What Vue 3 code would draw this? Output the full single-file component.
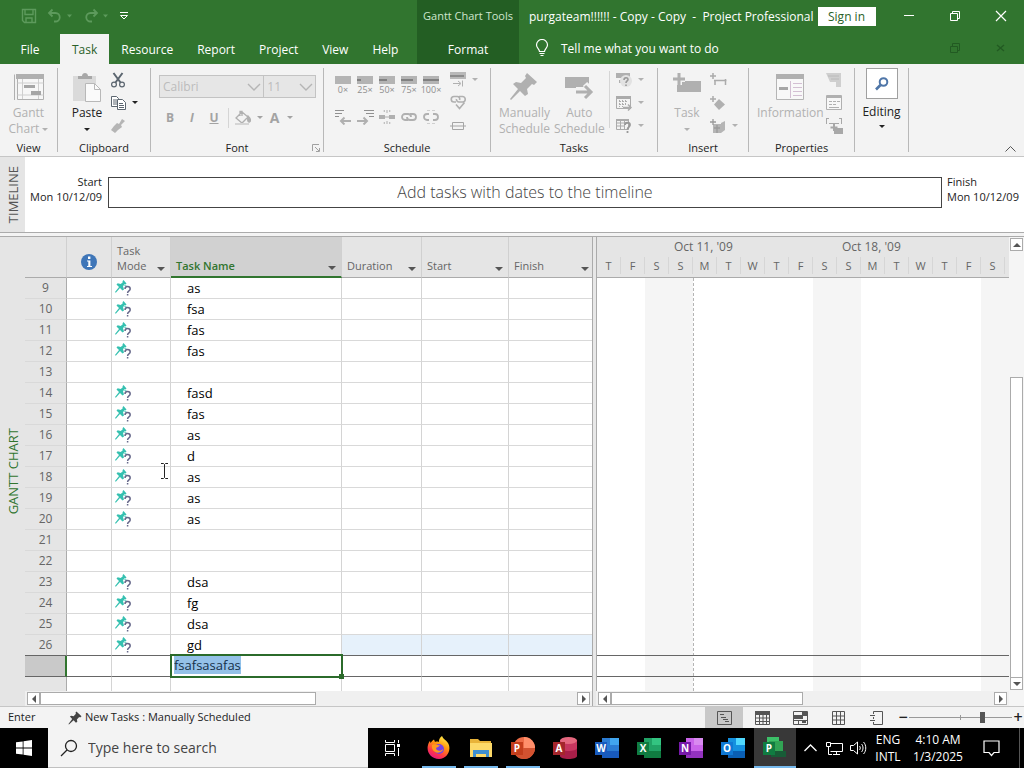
<script setup>
import { computed, onMounted, ref } from 'vue'

const tabs = ['File', 'Task', 'Resource', 'Report', 'Project', 'View', 'Help']
const activeTab = ref('Task')

const percents = [
  { label: '0×', fill: 0 },
  { label: '25×', fill: 4 },
  { label: '50×', fill: 8 },
  { label: '75×', fill: 12 },
  { label: '100×', fill: 16 }
]

const names = {
  9: 'as', 10: 'fsa', 11: 'fas', 12: 'fas', 14: 'fasd', 15: 'fas', 16: 'as', 17: 'd',
  18: 'as', 19: 'as', 20: 'as', 23: 'dsa', 24: 'fg', 25: 'dsa', 26: 'gd'
}
const rows = computed(() => {
  const list = []
  for (let id = 9; id <= 26; id++) list.push({ id, name: names[id] || '' })
  return list
})

const newTask = ref('fsafsasafas')
const editor = ref(null)

const weeks = [
  { label: '', days: ['T', 'F', 'S'] },
  { label: "Oct 11, '09", days: ['S', 'M', 'T', 'W', 'T', 'F', 'S'] },
  { label: "Oct 18, '09", days: ['S', 'M', 'T', 'W', 'T', 'F', 'S'] }
]
// the chart starts on a Thursday, so days 2 and 3 of every seven are the weekend
const dayColumns = Array.from({ length: 18 }, (_, i) => ({
  weekend: i % 7 === 2 || i % 7 === 3,
  today: i === 4
}))

const apps = [
  { letter: 'P', name: 'PowerPoint', kind: 'round', open: true, a: '#ed6c47', b: '#ff8f6b', c: '#d35230', d: '#c43e1c' },
  { letter: 'A', name: 'Access', kind: 'db', a: '#c7365f', b: '#e4677e', c: '#a81e48', d: '#a4262c' },
  { letter: 'W', name: 'Word', kind: 'doc', a: '#2b7cd3', b: '#41a5ee', c: '#185abd', d: '#185abd' },
  { letter: 'X', name: 'Excel', kind: 'doc', a: '#21a366', b: '#33c481', c: '#107c41', d: '#107c41' },
  { letter: 'N', name: 'OneNote', kind: 'doc', a: '#ca64ea', b: '#d98af0', c: '#9332bf', d: '#7719aa' },
  { letter: 'O', name: 'Outlook', kind: 'doc', a: '#1490df', b: '#50d9ff', c: '#0a5fb4', d: '#0f78d4' },
  { letter: 'P', name: 'Project', kind: 'proj', active: true, a: '#31a354', b: '#3cc068', c: '#185c37', d: '#107c41' }
]

const zoomLevel = ref(72)

onMounted(() => {
  editor.value.focus()
  editor.value.select()
})
</script>

<template>
  <div class="app">
    <header class="top">
      <div class="title-bar">
        <div class="quick">
          <button aria-label="Save">
            <svg width="16" height="16" viewBox="0 0 16 16" fill="none" stroke="#5d9a5c" stroke-width="1.4"><path d="M1.5 1.5h13v13h-11l-2-2zM4 1.5v5h8v-5M5 14.5v-4.5h6v4.5" /></svg>
          </button>
          <button aria-label="Undo">
            <svg width="26" height="16" viewBox="0 0 26 16" fill="none" stroke="#5d9a5c" stroke-width="1.8"><path d="M5.5 1.5L2 5l3.5 3.5M2 5h6.5a4 4 0 0 1 0 8.5H7" /><path d="M20 6.5h5l-2.5 3z" fill="#5d9a5c" stroke="none" /></svg>
          </button>
          <button aria-label="Redo">
            <svg width="26" height="16" viewBox="0 0 26 16" fill="none" stroke="#5d9a5c" stroke-width="1.8"><path d="M10.5 1.5L14 5l-3.5 3.5M14 5H7.5a4 4 0 0 0 0 8.5H9" /><path d="M20 6.5h5l-2.5 3z" fill="#5d9a5c" stroke="none" /></svg>
          </button>
          <button aria-label="Customize toolbar">
            <svg width="10" height="10" viewBox="0 0 10 10" fill="none" stroke="#fff"><path d="M1 1.5h8M1.5 4.5h7L5 8z" /></svg>
          </button>
        </div>
        <div class="context-title">Gantt Chart Tools</div>
        <div class="doc-title">purgateam!!!!!! - Copy - Copy&nbsp; -&nbsp; Project Professional</div>
        <button class="sign-in">Sign in</button>
        <div class="window-buttons">
          <button aria-label="Minimize"><svg width="12" height="12" viewBox="0 0 12 12" stroke="#fff"><path d="M1 5.5h10" /></svg></button>
          <button aria-label="Restore"><svg width="12" height="12" viewBox="0 0 12 12" fill="none" stroke="#fff"><path d="M1.5 3.5h7v7h-7zM3.5 3.5v-2h7v7h-2" /></svg></button>
          <button aria-label="Close"><svg width="12" height="12" viewBox="0 0 12 12" stroke="#fff" stroke-width="1.2"><path d="M1 1l10 10M11 1L1 11" /></svg></button>
        </div>
      </div>
      <nav class="tab-row">
        <div class="tabs">
          <button v-for="t in tabs" :key="t" class="tab" :class="{ active: t === activeTab }" @click="activeTab = t">{{ t }}</button>
        </div>
        <button class="tab context-tab">Format</button>
        <button class="tell-me">
          <svg width="14" height="18" viewBox="0 0 14 18" fill="none" stroke="#fff" stroke-width="1.2"><path d="M4.5 12.5c0-2.5-3-3.5-3-6.5a5.5 5.5 0 0 1 11 0c0 3-3 4-3 6.5zM4.5 14.5h5M5.5 16.5h3" /></svg>
          Tell me what you want to do
        </button>
        <div class="window-buttons child">
          <button aria-label="Restore document"><svg width="12" height="12" viewBox="0 0 12 12" fill="none" stroke="#225a22"><path d="M1.5 4.5h7v6h-7zM3.5 4.5v-3h7v7h-2" /></svg></button>
          <button aria-label="Close document"><svg width="12" height="12" viewBox="0 0 12 12" stroke="#225a22" stroke-width="1.4"><path d="M2 3l7 6M9 3L2 9" /></svg></button>
        </div>
      </nav>
    </header>

    <section class="ribbon">
      <div class="group g-view">
        <div class="tools">
          <button class="big" disabled>
            <svg width="32" height="30" viewBox="0 0 32 30" fill="none" stroke="#b0b0b0"><path d="M1.5 28V2.5M4.5 3.5h26v24h-26z" fill="#f7f7f7" /><path d="M3 2h28v5H3z" fill="#b0b0b0" stroke="none" /><path d="M4.5 11h26M9.5 7v20M25.5 7v20M4.5 23h26" stroke="#cfcfcf" /><path d="M11 13h11v3H11zM18 19h10v4H18z" fill="#a6a6a6" stroke="none" /></svg>
            <span>Gantt<br />Chart <i class="caret"></i></span>
          </button>
        </div>
        <div class="group-label">View</div>
      </div>
      <div class="group g-clipboard">
        <div class="tools from-left">
          <button class="big">
            <svg width="30" height="30" viewBox="0 0 30 30"><path d="M1 4h23v25H1z" fill="#dadada" /><path d="M6 7V4h4c0-4 6-4 6 0h4v3z" fill="#a8a8a8" /><path d="M13.5 11.5h9l6 6v12h-15z" fill="#fafafa" stroke="#b8b8b8" /><path d="M22.5 11.5v6h6" fill="none" stroke="#b8b8b8" /></svg>
            <span>Paste<br /><i class="caret"></i></span>
          </button>
          <div class="small-stack">
            <button aria-label="Cut"><svg width="16" height="16" viewBox="0 0 16 16" fill="none" stroke="#5c6670" stroke-width="1.6"><path d="M3.5 1l7 9.5M12.5 1l-7 9.5" stroke-width="2" /><circle cx="4" cy="12.5" r="2.4" stroke-width="1.2" /><circle cx="12" cy="12.5" r="2.4" stroke-width="1.2" /></svg></button>
            <button aria-label="Copy"><svg width="16" height="16" viewBox="0 0 16 16" fill="#fff" stroke="#5c6670"><path d="M1.5 1.5h5l2 2v8h-7zM3 5h4M3 7h4M3 9h4" /><path d="M7.5 4.5h5l3 3v7h-8zM9 8.5h4M9 10.5h5M9 12.5h5" /></svg><i class="caret"></i></button>
            <button aria-label="Format Painter" disabled><svg width="16" height="16" viewBox="0 0 16 16" fill="#b5b5b5"><path d="M12 1l3 2-4 4 1 2-4 3-4-4 3-3 2 1zM4 8l4 4-3 3-4-3z" /></svg></button>
          </div>
        </div>
        <div class="group-label">Clipboard</div>
      </div>
      <div class="group g-font">
        <div class="tools font-tools">
          <div class="combos">
            <label class="combo family"><select disabled aria-label="Font"><option>Calibri</option></select><svg width="14" height="8" viewBox="0 0 14 8" fill="none" stroke="#b5b5b5" stroke-width="1.4"><path d="M1 1l6 6 6-6" /></svg></label>
            <label class="combo size"><select disabled aria-label="Font size"><option>11</option></select><svg width="14" height="8" viewBox="0 0 14 8" fill="none" stroke="#b5b5b5" stroke-width="1.4"><path d="M1 1l6 6 6-6" /></svg></label>
          </div>
          <div class="format-row">
            <button disabled><b>B</b></button>
            <button disabled><b><i>I</i></b></button>
            <button disabled><b><u>U</u></b></button>
            <span class="split"></span>
            <button class="wide" disabled aria-label="Fill color"><svg width="18" height="16" viewBox="0 0 18 16" fill="none" stroke="#b0b0b0" stroke-width="1.3"><path d="M8 2l6 5-6 6-6-5zM6 6V1.5h2V6" /><path d="M14 6c3 3 3 5 1.500 6S13 9 14 6z" fill="#b0b0b0" /><path d="M1 14h14" stroke="#d5d5d5" stroke-width="2" /></svg><i class="caret"></i></button>
            <button class="wide letter" disabled><b>A</b><i class="caret"></i></button>
          </div>
        </div>
        <div class="group-label">Font
          <button class="launcher" aria-label="Font settings"><svg width="8" height="8" viewBox="0 0 8 8" fill="none" stroke="#a0a0a0"><path d="M7 .5H.5V7M3 3l4 4M7.5 4v3.5H4" /></svg></button>
        </div>
      </div>
      <div class="group g-schedule">
        <div class="tools from-left">
          <div class="schedule-grid">
            <button v-for="p in percents" :key="p.label" disabled class="percent">
              <svg width="16" height="8" viewBox="0 0 16 8"><path d="M0 0h16v8H0z" fill="#b4b4b4" /><path :d="`M0 3h${p.fill}v2H0z`" fill="#808080" /></svg>
              <span>{{ p.label }}</span>
            </button>
            <button disabled aria-label="Outdent"><svg width="17" height="15" viewBox="0 0 17 15" fill="none" stroke="#b0b0b0"><path d="M0 .5h9M0 3.5h7M0 6.5h4" stroke="#909090" /><path d="M16 11H6M9.5 7.500L6 11l3.5 3.5" stroke-width="2" /></svg></button>
            <button disabled aria-label="Indent"><svg width="17" height="15" viewBox="0 0 17 15" fill="none" stroke="#b0b0b0"><path d="M7 .5h10M9 3.5h8M12 6.5h5" stroke="#909090" /><path d="M0 11h10M6.5 7.500L10 11l-3.5 3.5" stroke-width="2" /></svg></button>
            <button disabled aria-label="Split"><svg width="16" height="16" viewBox="0 0 16 16" fill="#b0b0b0"><path d="M0 6h6v4H0zM10 6h6v4h-6zM6 7.5h4v1H6zM4 2l2-1v2zM12 2l-2-1v2zM4 14l2-1v2zM12 14l-2-1v2zM7.5 1h1v3h-1zM7.5 12h1v3h-1z" /></svg></button>
            <button disabled aria-label="Link"><svg width="16" height="10" viewBox="0 0 16 10" fill="none" stroke="#b0b0b0" stroke-width="1.8"><path d="M7 8H4a3 3 0 0 1 0-6h3a3 3 0 0 1 3 3M9 2h3a3 3 0 0 1 0 6H9a3 3 0 0 1-3-3" /></svg></button>
            <button disabled aria-label="Unlink"><svg width="16" height="14" viewBox="0 0 16 14" fill="none" stroke="#b0b0b0" stroke-width="1.8"><path d="M6 10H4a3 3 0 0 1 0-6h2M10 4h2a3 3 0 0 1 0 6h-2" /><path d="M4 .5h3M9 .5h3M4 13.5h3M9 13.5h3" stroke="#cfcfcf" stroke-width="1" /></svg></button>
          </div>
          <div class="small-stack">
            <button disabled aria-label="Mark on Track"><svg width="16" height="15" viewBox="0 0 16 15"><path d="M0 0h16v7H0z" fill="#b9b9b9" /><path d="M0 3h14v2H0z" fill="#8c8c8c" /><path d="M3 11.5h7M8 9l3 2.5L8 14M12.5 8.5v6" fill="none" stroke="#b0b0b0" /></svg><i class="caret"></i></button>
            <button disabled aria-label="Respect Links"><svg width="16" height="15" viewBox="0 0 16 15" fill="none" stroke="#b0b0b0" stroke-width="1.6"><path d="M6 7H4a2.500 2.500 0 0 1 0-5.500h3A2.500 2.500 0 0 1 9.500 5M9 1.500h3.500a2.500 2.500 0 0 1 0 5.500H9a2.500 2.500 0 0 1-2.500-3M6 9.500l3.500 4 5-6" /></svg></button>
            <button disabled aria-label="Inactivate"><svg width="16" height="8" viewBox="0 0 16 8" fill="none" stroke="#a5a5a5"><path d="M2.5.5h11v7h-11zM0 4h16" /></svg></button>
          </div>
        </div>
        <div class="group-label">Schedule</div>
      </div>
      <div class="group g-tasks">
        <div class="tools from-left">
          <button class="big" disabled>
            <svg width="30" height="30" viewBox="0 0 30 30" fill="#b0b0b0"><path d="M18 1l10 9-3 3-2-1-5 5 1 5-3 2-5-5L2 28l-1-1 8-10-5-5 3-2 5 1 5-5-1-2z" /></svg>
            <span>Manually<br />Schedule</span>
          </button>
          <button class="big" disabled>
            <svg width="30" height="30" viewBox="0 0 30 30" fill="#b0b0b0"><path d="M1 5h24v11H1z" /><path d="M12 18h14M21 12l6 6-6 6" fill="none" stroke="#f3f3f3" stroke-width="6" /><path d="M12 20h14M21 14l6 6-6 6" fill="none" stroke="#b0b0b0" stroke-width="3" /></svg>
            <span>Auto<br />Schedule</span>
          </button>
          <span class="split tall"></span>
          <div class="small-stack">
            <button disabled aria-label="Inspect"><svg width="16" height="16" viewBox="0 0 16 16"><path d="M0 1h14v5H0zM3 8h4v3H3z" fill="#b0b0b0" /><circle cx="10" cy="9" r="6" fill="#e2e2e2" /><path d="M8 8c0-3 4-3 4-.5 0 1.500-2 1.500-2 3.500M10 12.500v1.500" fill="none" stroke="#999" stroke-width="1.6" /></svg><i class="caret"></i></button>
            <button disabled aria-label="Move"><svg width="16" height="16" viewBox="0 0 16 16" fill="none" stroke="#ababab"><path d="M.5 1.5h14v12H.5z" /><path d="M0 1h15v3H0z" fill="#ababab" stroke="none" /><path d="M3 6.500h9M3 9.500h7M3.500 5v7M6.500 5v7M9.500 5v5" stroke-dasharray="2 1" /><path d="M7 12.500h8M12 9.500l3 3-3 3" stroke-width="1.5" /></svg><i class="caret"></i></button>
            <button disabled aria-label="Mode"><svg width="16" height="16" viewBox="0 0 16 16" fill="none" stroke="#ababab"><path d="M.5 1.5h12v10H.5zM.5 5h12M.5 8h8M4.500 2v9M8.500 2v9" /><path d="M0 1h13v2H0z" fill="#ababab" stroke="none" /><path d="M9 7c0-3 5-3 5 0 0 2-2.500 2-2.500 4.500M11.500 13v2" stroke="#999" stroke-width="1.8" /></svg><i class="caret"></i></button>
          </div>
        </div>
        <div class="group-label">Tasks</div>
      </div>
      <div class="group g-insert">
        <div class="tools from-left">
          <button class="big" disabled>
            <svg width="30" height="30" viewBox="0 0 30 30" fill="#b0b0b0"><path d="M7 9h22v11H5v-7h2z" /><path d="M7 1v12M1 7h12" stroke="#f3f3f3" stroke-width="6" /><path d="M7 1v12M1 7h12" stroke="#b0b0b0" stroke-width="3" /></svg>
            <span>Task<br /><i class="caret"></i></span>
          </button>
          <div class="small-stack">
            <button disabled aria-label="Summary"><svg width="17" height="14" viewBox="0 0 17 14" fill="none" stroke="#ababab" stroke-width="1.5"><path d="M3 0v6M0 3h6M4 7.500h12.500M5 7v5M15.500 6v6" /></svg></button>
            <button disabled aria-label="Milestone"><svg width="16" height="16" viewBox="0 0 16 16"><path d="M9 4l6 5.500L9 15 4 9.500z" fill="#b0b0b0" /><path d="M3 1v6M0 4h6" stroke="#ababab" stroke-width="1.5" /></svg></button>
            <button disabled aria-label="Deliverable"><svg width="16" height="16" viewBox="0 0 16 16"><path d="M3 6h8v9H3zM11 5l4-2v9l-4 3z" fill="#b5b5b5" /><path d="M3 1v6M0 4h6M4 10h6M7 7v8" stroke="#9a9a9a" stroke-width="1.3" /></svg><i class="caret"></i></button>
          </div>
        </div>
        <div class="group-label">Insert</div>
      </div>
      <div class="group g-properties">
        <div class="tools from-left">
          <button class="big" disabled>
            <svg width="30" height="30" viewBox="0 0 30 30" fill="none"><path d="M1.500 2.500h27v25h-27z" fill="#f8f8f8" stroke="#b5b5b5" /><path d="M1 2h28v5H1z" fill="#b0b0b0" /><path d="M4 15h9v3H4z" fill="#a6a6a6" /><path d="M15.500 9v17M18 11.500h9M18 15.500h9M18 19.500h9M18 23.500h9" stroke="#d3bfd3" /></svg>
            <span>Information</span>
          </button>
          <div class="small-stack">
            <button disabled aria-label="Notes"><svg width="16" height="14" viewBox="0 0 16 14" fill="#cfcfcf"><path d="M0 0h15v14h-5V9H4z" /><path d="M2 3h11M5 6h8" stroke="#bababa" /></svg></button>
            <button disabled aria-label="Details"><svg width="16" height="15" viewBox="0 0 16 15" fill="#f7f7f7" stroke="#b0b0b0"><path d="M.5.5h15v14H.5z" /><path d="M0 2h16" stroke-width="2" /><path d="M3 6.500h3M7 6.500h3M11 6.500h3M3 9.500h3M7 9.500h3M3 12.500h10" /></svg></button>
            <button disabled aria-label="Add to Timeline"><svg width="17" height="16" viewBox="0 0 17 16" fill="#a8a8a8"><path d="M0 0h3v1H1v5H0zM13 0h3v6h-1V1h-2zM3 5h10v1H3zM8 10h9v6H8z" /><path d="M8 6v7M4.500 9.500h7" stroke="#a8a8a8" stroke-width="2" /></svg></button>
          </div>
        </div>
        <div class="group-label">Properties</div>
      </div>
      <div class="group g-editing">
        <button class="editing">
          <span class="editing-icon"><svg width="14" height="14" viewBox="0 0 14 14" fill="none" stroke="#4f76a8" stroke-width="2"><circle cx="8.500" cy="5" r="3.800" /><path d="M5.500 8L1 12.500" stroke-width="2.6" /></svg></span>
          Editing
          <i class="caret"></i>
        </button>
      </div>
      <button class="collapse" aria-label="Collapse the Ribbon"><svg width="11" height="6" viewBox="0 0 11 6" fill="none" stroke="#555"><path d="M.5 5.500l5-5 5 5" /></svg></button>
    </section>

    <section class="timeline">
      <div class="side"><span>TIMELINE</span></div>
      <div class="edge start">Start<br />Mon 10/12/09</div>
      <div class="timeline-box">Add tasks with dates to the timeline</div>
      <div class="edge">Finish<br />Mon 10/12/09</div>
    </section>

    <main class="main">
      <div class="side gantt-side"><span>GANTT CHART</span></div>
      <div class="sheet">
        <div class="sheet-view">
          <table>
            <colgroup>
              <col class="c-id" /><col class="c-info" /><col class="c-mode" /><col class="c-name" />
              <col class="c-duration" /><col class="c-start" /><col class="c-finish" />
            </colgroup>
            <thead>
              <tr>
                <th></th>
                <th class="info"><svg width="16" height="16" viewBox="0 0 16 16"><circle cx="8" cy="8" r="8" fill="#3f76b8" /><path d="M7 2.500h2.400v2.400H7zM6 6.500h3.400v5.500H11v1H6v-1h1.300V7.500H6z" fill="#fff" /></svg></th>
                <th>Task<br />Mode<i class="caret"></i></th>
                <th class="current">Task Name<i class="caret"></i></th>
                <th>Duration<i class="caret"></i></th>
                <th>Start<i class="caret"></i></th>
                <th>Finish<i class="caret"></i></th>
              </tr>
            </thead>
            <tbody>
              <tr v-for="row in rows" :key="row.id" :class="{ tinted: row.id === 26 }">
                <td class="id">{{ row.id }}</td>
                <td></td>
                <td class="mode">
                  <svg v-if="row.name" width="17" height="16" viewBox="0 0 17 16" fill="none"><path d="M8.500 0l3 3.500-1 1-1-.3-1.500 2 1 3.300-1.500 1L5 8 .8 12.800 0 12l4-5L1.500 4.500l1.200-1.200 3 .7L7.800 2.200l-.3-1z" fill="#35c0b0" /><path d="M9.500 5.500l3 1" stroke="#35c0b0" /><path d="M10 9c0-3.200 5.200-3.200 5.200 0 0 2-2.600 1.800-2.600 4M12.600 14v1.500" stroke="#66688a" stroke-width="1.5" /></svg>
                </td>
                <td class="name">{{ row.name }}</td>
                <td></td>
                <td></td>
                <td></td>
              </tr>
              <tr class="editing-row">
                <td class="id"></td>
                <td></td>
                <td></td>
                <td class="edit-cell"><input ref="editor" v-model="newTask" aria-label="Task Name" spellcheck="false" /></td>
                <td></td>
                <td></td>
                <td></td>
              </tr>
              <tr>
                <td class="id"></td><td></td><td></td><td></td><td></td><td></td><td></td>
              </tr>
            </tbody>
          </table>
        </div>
        <div class="hscroll">
          <button aria-label="Scroll left"><i class="tri left"></i></button>
          <div class="hthumb sheet-thumb"></div>
          <button class="end" aria-label="Scroll right"><i class="tri right"></i></button>
        </div>
        <svg class="pointer" width="7" height="16" viewBox="0 0 7 16" fill="none" stroke="#222"><path d="M0 .5h2.500l1 1 1-1H7M3.500 1.500v13M0 15.500h2.500l1-1 1 1H7" /></svg>
      </div>
      <div class="splitter"></div>
      <div class="chart">
        <div class="chart-head">
          <div v-for="(week, i) in weeks" :key="i" class="week">
            <div class="week-label">{{ week.label }}</div>
            <div class="days"><span v-for="(d, j) in week.days" :key="j">{{ d }}</span></div>
          </div>
        </div>
        <div class="chart-body">
          <div v-for="(day, i) in dayColumns" :key="i" class="day" :class="day"></div>
          <div class="row-band"></div>
        </div>
        <div class="hscroll">
          <button aria-label="Scroll left"><i class="tri left"></i></button>
          <div class="hthumb chart-thumb"></div>
          <button class="end" aria-label="Scroll right"><i class="tri right"></i></button>
        </div>
      </div>
      <div class="vscroll">
        <button aria-label="Scroll up"><i class="tri up"></i></button>
        <div class="vspace"></div>
        <div class="vthumb"></div>
        <button aria-label="Scroll down"><i class="tri down"></i></button>
      </div>
    </main>

    <footer class="status">
      <span class="status-mode">Enter</span>
      <svg width="14" height="14" viewBox="0 0 30 30" fill="#444"><path d="M18 1l11 10-3 3-2-1-5 5 1 5-3 2-5-5L2 29l-1-1 8-11-5-5 3-2 5 1 5-5-1-2z" /></svg>
      <span class="status-text">New Tasks : Manually Scheduled</span>
      <div class="views">
        <button class="active" aria-label="Gantt Chart"><svg width="15" height="14" viewBox="0 0 15 14" fill="none" stroke="#555"><path d="M.5.5h14v13H.5zM3 3.500h4M4 6.500h5M6 8.500h5M8 10.500h4" /></svg></button>
        <button aria-label="Task Usage"><svg width="15" height="14" viewBox="0 0 15 14" fill="none" stroke="#555"><path d="M.5.5h14v13H.5zM.5 7h14M.5 10.500h14M4.500 4v10M8 4v10M11.500 4v10" /><path d="M0 0h15v4H0z" fill="#555" stroke="none" /></svg></button>
        <button aria-label="Team Planner"><svg width="15" height="14" viewBox="0 0 15 14" fill="none" stroke="#555"><path d="M.5.5h14v13H.5zM.5 9.500h14M5.500 9v5" /><path d="M1 4h9v4H1zM9 1h5v4H9zM9 10h4v2H9z" fill="#555" stroke="none" /></svg></button>
        <button aria-label="Resource Sheet"><svg width="13" height="14" viewBox="0 0 13 14" fill="none" stroke="#555"><path d="M.5.5h12v13H.5zM.5 5h12M.5 9h12M4.500.5v13M8.500.5v13" /></svg></button>
        <button aria-label="Report"><svg width="13" height="14" viewBox="0 0 13 14" fill="none" stroke="#555"><path d="M3.500 3V.5h9v13h-9V11M0 4.500h5M0 9.500h5M3.500 6v2" /></svg></button>
      </div>
      <div class="zoom">
        <button aria-label="Zoom out">&#x2212;</button>
        <input v-model="zoomLevel" type="range" min="0" max="100" aria-label="Zoom" />
        <button aria-label="Zoom in">+</button>
      </div>
    </footer>

    <div class="taskbar">
      <button class="start-button" aria-label="Start"><svg width="16" height="16" viewBox="0 0 16 16" fill="#fff"><path d="M0 2.300L6.700 1.400v6.200H0zM7.500 1.300L16 0v7.600H7.500zM0 8.400h6.700v6.200L0 13.700zM7.500 8.400H16V16l-8.500-1.200z" /></svg></button>
      <label class="search">
        <svg width="18" height="18" viewBox="0 0 18 18" fill="none" stroke="#222" stroke-width="1.3"><circle cx="11" cy="7" r="5.500" /><path d="M7 11l-6 6" /></svg>
        <input type="text" placeholder="Type here to search" aria-label="Search" />
      </label>
      <button class="task-view" aria-label="Task View"><svg width="17" height="16" viewBox="0 0 17 16" fill="none" stroke="#fff"><path d="M1.500 0v2.500h9V0M1.500 4.500h9v7h-9zM1.500 16v-2.500h9V16M14.500 0v3M14.500 8v8" /><path d="M13 4h3v3h-3z" fill="#fff" stroke="none" /></svg></button>
      <button class="app-button open" aria-label="Firefox">
        <svg width="24" height="24" viewBox="0 0 24 24"><defs><linearGradient id="fox" x1=".8" y1="0" x2=".3" y2="1"><stop offset="0" stop-color="#fff44f" /><stop offset=".4" stop-color="#ff980e" /><stop offset=".75" stop-color="#ff3647" /><stop offset="1" stop-color="#e31587" /></linearGradient></defs><path d="M15 0c1 3 4 4 6 7 4 7-1 16-9 16S-1 16 1 9c.5-2 1-3 2-4l.5 2C5 5 6 4 7 3.500L8 6c2-1 4 0 4 0-.5-2 1-5 3-6z" fill="url(#fox)" /><circle cx="12" cy="13" r="5" fill="#7542e5" /><path d="M5 9c3-2 5 1 8 0-1 2-3 2-4 3 0 3 5 4 7 1 0 4-9 6-11-1z" fill="#ff9a1e" /></svg>
      </button>
      <button class="app-button open" aria-label="File Explorer">
        <svg width="24" height="22" viewBox="0 0 24 22"><path d="M1 2h8l2 2h11v16H1z" fill="#e8b339" /><path d="M1 6h22v14H1z" fill="#fcd969" /><path d="M4 20v-7h16v7h-3v-3H7v3z" fill="#3f8fd0" /><path d="M7 17h10v3H7z" fill="#fcd969" /></svg>
      </button>
      <button v-for="app in apps" :key="app.name" class="app-button" :class="{ open: app.open, active: app.active }" :aria-label="app.name">
        <svg width="26" height="24" viewBox="0 0 26 24">
          <template v-if="app.kind === 'round'">
            <circle cx="14" cy="12" r="11" :fill="app.a" />
            <path d="M14 1a11 11 0 0 1 11 11H14z" :fill="app.b" />
            <path d="M3 12h22a11 11 0 0 1-22 0z" :fill="app.c" />
          </template>
          <template v-else-if="app.kind === 'db'">
            <path d="M8 4v16c0 4 17 4 17 0V4z" :fill="app.c" />
            <path d="M8 4v8c0 4 17 4 17 0V4z" :fill="app.a" />
            <ellipse cx="16.500" cy="4.500" rx="8.500" ry="3.500" :fill="app.b" />
          </template>
          <template v-else-if="app.kind === 'proj'">
            <path d="M5 1h12v9H5z" :fill="app.b" />
            <path d="M7 5h14v12H7z" :fill="app.a" />
            <path d="M9 15h15v6H9z" :fill="app.c" />
          </template>
          <template v-else>
            <path d="M8 2h17v20H8z" :fill="app.a" />
            <path d="M16 2h9v7h-9z" :fill="app.b" />
            <path d="M8 15h17v7H8z" :fill="app.c" />
          </template>
          <path d="M1 6h12v13H1z" :fill="app.d" />
          <text x="7" y="16" text-anchor="middle" fill="#fff" font-size="10" font-weight="700">{{ app.letter }}</text>
        </svg>
      </button>
      <div class="tray">
        <button aria-label="Show hidden icons"><svg width="13" height="8" viewBox="0 0 13 8" fill="none" stroke="#fff" stroke-width="1.3"><path d="M.5 7l6-6 6 6" /></svg></button>
        <button aria-label="Network"><svg width="17" height="15" viewBox="0 0 17 15" fill="none" stroke="#fff"><path d="M4.500 2.500h12v8h-12M10.500 11v3M7 13.500h7M.5 1.500h4v4h-4zM2.500 6v7.500H6" /></svg></button>
        <button aria-label="Volume"><svg width="17" height="14" viewBox="0 0 17 14" fill="none" stroke="#fff"><path d="M.5 4.500h3L7.500 1v12l-4-3.500h-3zM9.500 5c1 1 1 3 0 4M11.500 3c2 2 2 6 0 8M13.500 1c3 3 3 9 0 12" /></svg></button>
        <div class="language">ENG<br />INTL</div>
        <div class="clock">4:10 AM<br />1/3/2025</div>
        <button class="notify" aria-label="Notifications"><svg width="17" height="17" viewBox="0 0 17 17" fill="none" stroke="#fff" stroke-width="1.2"><path d="M1 1h15v11.500h-5L8.500 15.500 6 12.500H1z" /></svg></button>
        <span class="peek"></span>
      </div>
    </div>
  </div>
</template>

<style>
body {
  margin: 0;
}
</style>

<style scoped>
.app {
  display: flex;
  flex-direction: column;
  height: 100vh;
  overflow: hidden;
  background: #f3f3f3;
  color: #222;
  font-family: "Open Sans", "Noto Sans", sans-serif;
  font-size: 12px;
}

.app * {
  box-sizing: border-box;
}

button,
input,
select {
  font: inherit;
  color: inherit;
}

button {
  display: flex;
  align-items: center;
  justify-content: center;
  padding: 0;
  border: 0;
  background: none;
  white-space: nowrap;
}

svg {
  display: block;
  flex: none;
}

.caret {
  display: inline-block;
  flex: none;
  border: 3px solid transparent;
  border-top-color: currentColor;
  border-bottom: 0;
  vertical-align: middle;
}

/* title bar and tabs */
.top {
  flex: none;
  background: #31752f;
  color: #fff;
}

.title-bar,
.tab-row {
  display: flex;
  align-items: center;
  height: 32px;
}

.quick {
  display: flex;
  align-items: center;
  gap: 10px;
  width: 417px;
  padding-left: 21px;
}

.context-title {
  width: 102px;
  height: 32px;
  background: #235e23;
  line-height: 32px;
  font-size: 11px;
  text-align: center;
  color: #cfe6cf;
  white-space: nowrap;
}

.doc-title {
  padding: 0 4px 0 10px;
  white-space: nowrap;
}

.sign-in {
  width: 58px;
  height: 19px;
  background: #fff;
  color: #2a5f29;
}

.window-buttons {
  display: flex;
  margin-left: auto;
}

.window-buttons button {
  width: 46px;
  height: 32px;
}

.tabs {
  display: flex;
  width: 417px;
  height: 32px;
  padding-top: 2px;
}

.tab {
  height: 30px;
  padding: 0 12px;
}

.tab:first-child {
  width: 60px;
}

.tab.active {
  background: #f3f3f3;
  color: #2a5f29;
}

.tab.context-tab {
  width: 102px;
  height: 32px;
  padding: 2px 0 0;
  background: #235e23;
}

.tell-me {
  gap: 12px;
  padding-left: 16px;
}

/* ribbon */
.ribbon {
  position: relative;
  display: flex;
  flex: none;
  height: 93px;
  padding: 4px 0;
  border-bottom: 1px solid #c6c6c6;
}

.group {
  display: flex;
  flex: none;
  flex-direction: column;
  border-right: 1px solid #b8b8b8;
}

.g-view { width: 58px; }
.g-clipboard { width: 93px; }
.g-font { width: 173px; }
.g-schedule { width: 167px; }
.g-tasks { width: 167px; }
.g-insert { width: 91px; }
.g-properties { width: 106px; }
.g-editing { width: 54px; }

.tools {
  display: flex;
  flex: none;
  justify-content: center;
  height: 72px;
}

.tools.from-left {
  justify-content: flex-start;
  padding-left: 6px;
}

.group-label {
  position: relative;
  line-height: 16px;
  font-size: 11px;
  text-align: center;
}

.big {
  flex-direction: column;
  justify-content: flex-start;
  gap: 3px;
  min-width: 46px;
  padding: 4px 2px 0;
  line-height: 16px;
}

button:disabled {
  color: #b1b1b1;
}

.small-stack {
  display: flex;
  flex-direction: column;
}

.small-stack button {
  justify-content: flex-start;
  gap: 6px;
  height: 23px;
}

.font-tools {
  flex-direction: column;
  justify-content: flex-start;
  padding: 7px 7px 0 8px;
  gap: 8px;
}

.combos {
  display: flex;
}

.combo {
  position: relative;
  display: flex;
}

.family {
  flex: 2;
  margin-right: -1px;
}

.size {
  flex: 1;
}

.combo select {
  width: 100%;
  height: 23px;
  padding: 0 3px;
  border: 1px solid #c3c3c3;
  border-radius: 0;
  background: #e6e6e6;
  color: #bcbcbc;
  opacity: 1;
  appearance: none;
}

.combo svg {
  position: absolute;
  top: 8px;
  right: 3px;
}

.format-row {
  display: flex;
  align-items: center;
}

.format-row button {
  width: 22px;
  height: 23px;
  color: #a3a3a3;
}

.format-row .wide {
  gap: 5px;
  width: 33px;
}

.format-row .letter {
  gap: 8px;
  font-size: 14px;
}

.split {
  width: 1px;
  height: 20px;
  margin: 0 3px;
  background: #d5d5d5;
}

.split.tall {
  height: 57px;
  margin: 3px 6px 0 2px;
}

.launcher {
  position: absolute;
  right: 3px;
  top: 4px;
}

.schedule-grid {
  display: grid;
  flex: none;
  grid-template-columns: repeat(5, 22px);
  grid-template-rows: 34px 30px;
  margin-left: 2px;
  margin-right: 8px;
}

.percent {
  flex-direction: column;
  font-size: 9px;
  line-height: 11px;
}

.percent:disabled {
  color: #8f8f8f;
}

.editing {
  flex-direction: column;
  width: 53px;
  line-height: 25px;
}

.editing .caret {
  margin-top: 1px;
}

.editing-icon {
  display: flex;
  align-items: center;
  justify-content: center;
  width: 32px;
  height: 31px;
  border: 1px solid #a0a0a0;
  background: #fff;
}

.collapse {
  position: absolute;
  right: 8px;
  bottom: 4px;
}

/* timeline */
.timeline {
  display: flex;
  flex: none;
  height: 76px;
  border-bottom: 1px solid #ababab;
  background: #fff;
}

.side {
  display: flex;
  flex: none;
  align-items: center;
  justify-content: center;
  width: 25px;
  background: #e5e5e5;
  color: #555;
  font-size: 13px;
}

.side span {
  writing-mode: vertical-rl;
  transform: rotate(180deg);
}

.edge {
  width: 82px;
  padding: 17px 0 0 5px;
  font-size: 11px;
  line-height: 15px;
  white-space: nowrap;
}

.edge.start {
  width: 83px;
  padding: 17px 6px 0 0;
  text-align: right;
}

.timeline-box {
  flex: 1;
  height: 31px;
  margin-top: 20px;
  border: 1px solid #444;
  color: #444;
  font-size: 16px;
  font-weight: 300;
  line-height: 29px;
  text-align: center;
}

/* main area */
.main {
  display: flex;
  flex: 1;
  min-height: 0;
  margin-top: 3px;
  border-top: 1px solid #ababab;
  border-bottom: 1px solid #c6c6c6;
}

.gantt-side {
  color: #31752f;
}

.sheet {
  position: relative;
  display: flex;
  flex: none;
  flex-direction: column;
  width: 567px;
}

.sheet-view {
  flex: 1;
  min-height: 0;
  overflow: hidden;
  background: #fff;
}

table {
  width: 567px;
  border-collapse: separate;
  border-spacing: 0;
  table-layout: fixed;
}

.c-id { width: 42px; }
.c-info { width: 45px; }
.c-mode { width: 59px; }
.c-name { width: 171px; }
.c-duration { width: 80px; }
.c-start { width: 87px; }
.c-finish { width: 83px; }

th {
  position: relative;
  height: 41px;
  padding: 0 5px 4px;
  border-right: 1px solid #d0d0d0;
  border-bottom: 1px solid #ababab;
  background: #e5e5e5;
  color: #666;
  font-size: 11px;
  font-weight: 400;
  line-height: 15px;
  text-align: left;
  vertical-align: bottom;
}

th .caret {
  position: absolute;
  right: 5px;
  bottom: 6px;
  border-width: 4px 4px 0;
  color: #555;
}

th:last-child .caret {
  right: 3px;
}

th.info {
  padding: 0 14px 7px;
}

th.current {
  padding-bottom: 3px;
  border-bottom: 2px solid #31752f;
  background: #d1d1d1;
  color: #31752f;
  font-weight: 600;
}

td {
  height: 21px;
  padding: 0;
  border-right: 1px solid #d4d4d4;
  border-bottom: 1px solid #d9d9d9;
  line-height: 20px;
}

tr > :last-child {
  border-right: 0;
}

td.id {
  border-right-color: #ababab;
  background: #e5e5e5;
  color: #666;
  text-align: center;
}

.mode svg {
  margin-left: 3px;
}

.name {
  padding-left: 16px;
  color: #000;
  font-size: 13px;
}

.tinted td {
  border-bottom-color: #666;
}

.tinted td:nth-child(n + 5) {
  background: #e6f1fb;
}

.editing-row td {
  border-bottom-color: #666;
}

.editing-row td.id {
  border-right: 2px solid #31752f;
  background: #c9c9c9;
}

.edit-cell {
  position: relative;
}

.edit-cell input {
  position: absolute;
  top: -2px;
  left: -1px;
  width: 173px;
  height: 24px;
  padding: 0 2px 2px;
  border: 2px solid #2b6b2b;
  outline: 0;
  background: #fff;
  font-size: 13px;
}

.edit-cell::after {
  content: '';
  position: absolute;
  right: -3px;
  bottom: -3px;
  width: 5px;
  height: 5px;
  background: #2b6b2b;
}

.edit-cell input::selection {
  background: #94c1e8;
  color: #14304a;
}

.hscroll {
  display: flex;
  flex: none;
  height: 15px;
  padding: 1px 2px;
  background: #f0f0f0;
}

.hscroll button,
.vscroll button {
  width: 13px;
  height: 13px;
  border: 1px solid #ababab;
  background: #fff;
}

.hscroll .end {
  margin-left: auto;
}

.hthumb {
  height: 13px;
  border: 1px solid #ababab;
  background: #fff;
}

.sheet-thumb {
  width: 49%;
}

.chart-thumb {
  width: 47%;
}

.tri {
  border: 4px solid transparent;
}

.tri.left {
  border-left: 0;
  border-right-color: #555;
}

.tri.right {
  border-right: 0;
  border-left-color: #555;
}

.tri.up {
  border-top: 0;
  border-bottom-color: #555;
}

.tri.down {
  border-bottom: 0;
  border-top-color: #555;
}

.pointer {
  position: absolute;
  left: 136px;
  top: 226px;
}

.splitter {
  flex: none;
  width: 4px;
  border-left: 1px solid #ababab;
  background: #e8e8e8;
}

.chart {
  display: flex;
  flex: 1;
  flex-direction: column;
  min-width: 0;
}

.chart-head {
  display: flex;
  height: 41px;
  flex: none;
  overflow: hidden;
  border-bottom: 1px solid #ababab;
  border-left: 1px solid #ababab;
  background: #e5e5e5;
  color: #666;
  font-size: 11px;
}

.week {
  flex: none;
}

.week-label {
  height: 20px;
  padding-left: 5px;
  font-size: 12px;
  line-height: 20px;
  white-space: nowrap;
}

.days {
  display: flex;
  line-height: 17px;
}

.days span {
  width: 24px;
  border-right: 1px solid #d6d6d6;
  text-align: center;
}

.chart-body {
  position: relative;
  display: flex;
  flex: 1;
  min-height: 0;
  overflow: hidden;
  border-left: 1px solid #ababab;
  background: #fff;
}

.day {
  flex: none;
  width: 24px;
}

.weekend {
  background: #f5f5f5;
}

.today {
  border-left: 1px dashed #b5b5b5;
}

/* outlines the row being typed into */
.row-band {
  position: absolute;
  top: 377px;
  left: 0;
  right: 0;
  height: 22px;
  border-top: 1px solid #666;
  border-bottom: 1px solid #666;
}

.vscroll {
  display: flex;
  flex: none;
  flex-direction: column;
  width: 15px;
  padding: 1px 1px 16px;
  background: #f5f5f5;
}

.vspace {
  flex: 127;
}

.vthumb {
  flex: 300;
  border: 1px solid #ababab;
  border-bottom: 0;
  background: #fff;
}

/* status bar */
.status {
  display: flex;
  flex: none;
  align-items: center;
  height: 21px;
  padding-left: 8px;
  font-size: 11px;
  line-height: 19px;
}

.status-mode {
  width: 60px;
}

.status-mode,
.status-text {
  padding-bottom: 2px;
}

.status-text {
  padding-left: 3px;
}

.views {
  display: flex;
  margin-left: auto;
}

.views button {
  width: 38px;
  height: 21px;
}

.views .active {
  background: #c8c8c8;
}

.zoom {
  display: flex;
  align-items: center;
  width: 129px;
  padding-left: 2px;
}

.zoom button {
  width: 12px;
  font-size: 16px;
  font-weight: 600;
}

.zoom input {
  flex: 1;
  min-width: 0;
  height: 20px;
  margin: 0;
  background: linear-gradient(#999, #999) center / 100% 1px no-repeat,
    linear-gradient(#999, #999) center / 1px 5px no-repeat;
  appearance: none;
}

.zoom input::-webkit-slider-thumb {
  width: 5px;
  height: 11px;
  background: #555;
  appearance: none;
}

/* taskbar */
.taskbar {
  display: flex;
  flex: none;
  height: 40px;
  background: #000;
  color: #fff;
}

.start-button,
.task-view {
  flex: none;
  width: 48px;
}

.task-view {
  margin-right: 2px;
}

.search {
  display: flex;
  flex: none;
  align-items: center;
  gap: 10px;
  width: 320px;
  padding-left: 12px;
  border-bottom: 1px solid #c0c0c0;
  background: #f3f3f3;
}

.search input {
  flex: 1;
  min-width: 0;
  padding: 0;
  border: 0;
  outline: 0;
  background: none;
  font-size: 14px;
}

.search input::placeholder {
  color: #444;
}

.app-button {
  position: relative;
  flex: none;
  width: 42px;
}

.app-button.active {
  background: #383838;
}

.app-button.open::after,
.app-button.active::after {
  content: '';
  position: absolute;
  left: 4px;
  right: 4px;
  bottom: 0;
  height: 2px;
  background: #76b9ed;
}

.app-button.active::after {
  left: 0;
  right: 0;
}

.tray {
  display: flex;
  align-items: center;
  margin-left: auto;
  line-height: 17px;
  text-align: center;
}

.tray button {
  width: 24px;
  height: 40px;
}

.language {
  width: 36px;
}

.clock {
  width: 64px;
}

.tray .notify {
  width: 42px;
}

.peek {
  width: 1px;
  height: 40px;
  margin: 0 4px 0 7px;
  background: #555;
}
</style>
